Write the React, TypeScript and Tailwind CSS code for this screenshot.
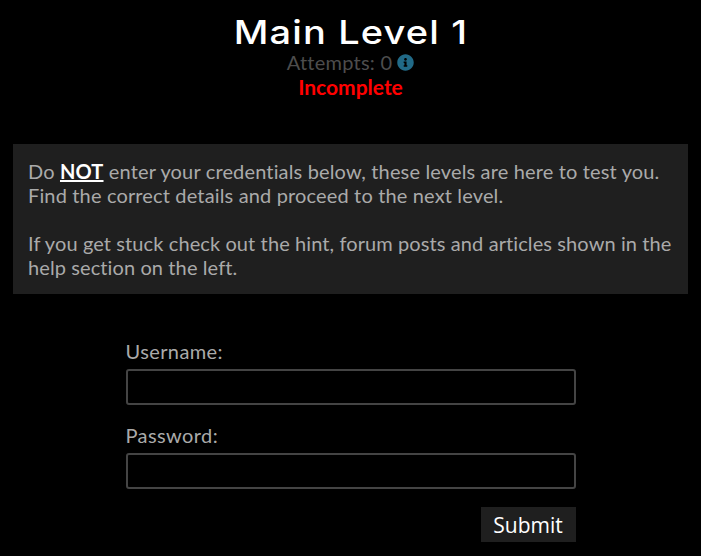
import { FaInfoCircle } from "react-icons/fa";

export default function App() {
  return (
    <div className="bg-black min-h-[556px] h-[556px] overflow-hidden font-['Lato',sans-serif] text-[20px] tracking-[0.1px] leading-6 text-[#aaaaaa]">
      <div className="flex flex-col items-center pt-[13px]">
        <h1 className="font-['Inter',sans-serif] text-[33px] leading-[38px] font-medium tracking-[1px] scale-x-[1.15] text-white">
          Main Level 1
        </h1>
        <div className="flex items-center gap-[5px] text-[#4d4d4d] tracking-[0.25px] leading-[23px]">
          Attempts: 0
          <FaInfoCircle className="w-[17px] h-[17px] text-[#216a87]" />
        </div>
        <div className="text-[#ff0000] font-bold text-[21px] tracking-normal leading-[26px]">Incomplete</div>
      </div>

      <div className="mt-[44px] mx-[13px] bg-[#1f1f1f] px-[15px] pt-[15px] pb-[15px]">
        <p className="tracking-[0.15px]">
          Do <span className="font-bold text-white underline">NOT</span> enter your credentials below, these levels are
          here to test you. Find the correct details and proceed to the next level.
        </p>
        <p className="mt-6">
          If you get stuck check out the hint, forum posts and articles shown in the help section on the left.
        </p>
      </div>

      <form className="w-[450px] mx-auto mt-[45px]">
        <label className="block tracking-[0.4px]">Username:</label>
        <input className="block w-full h-9 mt-[6px] bg-black border-2 border-[#444444] rounded-[3px]" type="text" />
        <label className="block mt-[18px] tracking-[0.4px]">Password:</label>
        <input className="block w-full h-9 mt-[6px] bg-black border-2 border-[#444444] rounded-[3px]" type="password" />
        <div className="flex justify-end mt-[18px]">
          <button type="button" className="bg-[#1f1f1f] text-white w-[95px] h-[35px] font-['Open_Sans',sans-serif] text-[21px] tracking-normal">
            Submit
          </button>
        </div>
      </form>
    </div>
  );
}
